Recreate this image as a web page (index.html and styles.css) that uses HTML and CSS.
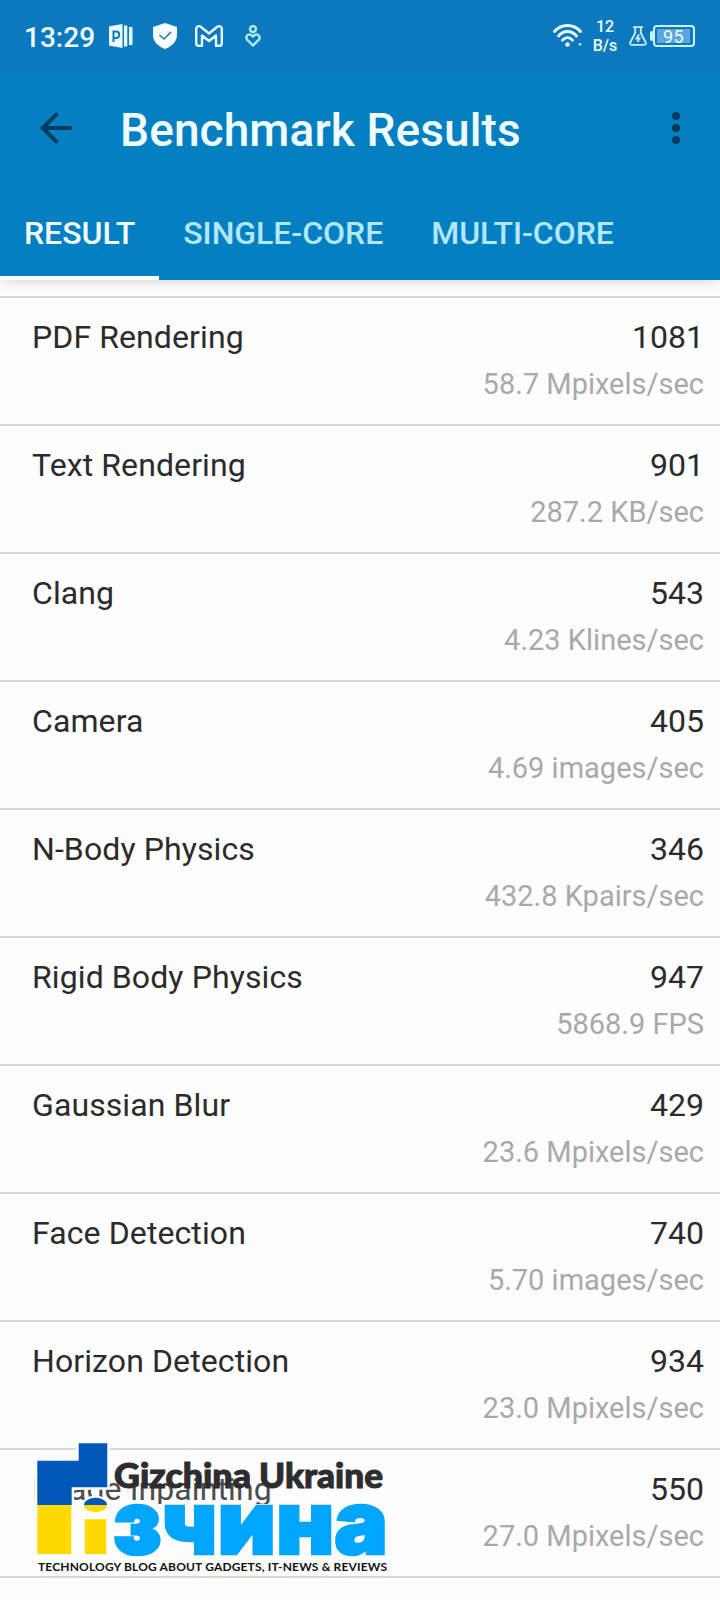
FILE: index.html
```html
<!DOCTYPE html>
<html lang="en">

<head>
    <meta charset="UTF-8">
    <meta name="viewport" content="width=device-width, initial-scale=1.0">
    <title>Benchmark Results</title>
    <link rel="stylesheet" href="styles.css">
</head>

<body>
    <header class="header">
        <div class="status">
            <span class="clock">13:29</span>
            <svg class="app" width="26" height="26" viewBox="0 0 26 26">
                <path d="M1 4Q1 3.500 2 3.200L14.500 1V25L2 22.800Q1 22.500 1 22Z" fill="#eefcff" />
                <path d="M16 2.500H19.300V23.500H16ZM21 4H24.500V22H21Z" fill="#dff8ff" />
                <path d="M5.500 19V8.500H8.500A3.300 3.300 0 0 1 8.500 15H5.500" fill="none" stroke="#0c79be" stroke-width="2" />
            </svg>
            <svg class="shield" width="24" height="26" viewBox="0 0 24 26">
                <path d="M12 0L24 4V12C24 19 18.500 23.500 12 26C5.500 23.500 0 19 0 12V4Z" fill="#f5feff" />
                <path d="M6.500 12L11 16L18 9" fill="none" stroke="#2a77a8" stroke-width="1.600" />
            </svg>
            <svg class="mail" width="28" height="22" viewBox="0 0 28 22">
                <path d="M1.200 4C1.200 1 4 .500 6 2L14 8.500L22 2C24 .500 26.800 1 26.800 4V18.500Q26.800 20.800 24.500 20.800H21V10.500L14 16L7 10.500V20.800H3.500Q1.200 20.800 1.200 18.500Z" fill="none" stroke="#e6faff" stroke-width="2.400" stroke-linejoin="round" />
            </svg>
            <svg class="care" width="16" height="22" viewBox="0 0 16 22">
                <circle cx="8" cy="4" r="3" />
                <path d="M8 20.500L2 14.500C-.500 11 4.500 7 8 11.500C11.500 7 16.500 11 14 14.500Z" />
            </svg>
            <div class="right">
                <svg class="wifi" width="30" height="26" viewBox="0 0 30 26">
                    <path d="M1.500 8.500C8.500 .500 20.500 .500 27.500 8.500M5.500 13C10.500 7 18.500 7 23.500 13M9.500 17.200C12.500 13.700 16.500 13.700 19.500 17.200" />
                    <circle cx="14.500" cy="21.500" r="2.300" />
                    <path class="tip" d="M25 20.500H29L27 23Z" />
                </svg>
                <div class="speed">12<br>B/s</div>
                <svg class="flask" width="18" height="20" viewBox="0 0 18 20">
                    <path d="M4 1.200H14M6.200 1.500V7L1.200 16.500Q.800 18.800 3 18.800H15Q17.200 18.800 16.800 16.500L11.800 7V1.500" />
                    <path d="M10 8.500L7.500 12.500H10.500L8.500 16" />
                </svg>
                <div class="battery"><span>95</span></div>
            </div>
        </div>
        <div class="toolbar">
            <svg width="48" height="48" viewBox="0 0 24 24">
                <path d="M20 11H7.830l5.590-5.590L12 4l-8 8 8 8 1.410-1.410L7.830 13H20v-2z" />
            </svg>
            <h1>Benchmark Results</h1>
            <svg width="48" height="48" viewBox="0 0 24 24">
                <circle cx="12" cy="6" r="2" />
                <circle cx="12" cy="12" r="2" />
                <circle cx="12" cy="18" r="2" />
            </svg>
        </div>
        <nav class="tabs">
            <a class="tab active">RESULT</a>
            <a class="tab">SINGLE-CORE</a>
            <a class="tab">MULTI-CORE</a>
        </nav>
    </header>

    <main class="results">
        <div class="row">
            <p class="name">PDF Rendering</p>
            <div class="value">
                <p class="score">1081</p>
                <p class="rate">58.7 Mpixels/sec</p>
            </div>
        </div>
        <div class="row">
            <p class="name">Text Rendering</p>
            <div class="value">
                <p class="score">901</p>
                <p class="rate">287.2 KB/sec</p>
            </div>
        </div>
        <div class="row">
            <p class="name">Clang</p>
            <div class="value">
                <p class="score">543</p>
                <p class="rate">4.23 Klines/sec</p>
            </div>
        </div>
        <div class="row">
            <p class="name">Camera</p>
            <div class="value">
                <p class="score">405</p>
                <p class="rate">4.69 images/sec</p>
            </div>
        </div>
        <div class="row">
            <p class="name">N-Body Physics</p>
            <div class="value">
                <p class="score">346</p>
                <p class="rate">432.8 Kpairs/sec</p>
            </div>
        </div>
        <div class="row">
            <p class="name">Rigid Body Physics</p>
            <div class="value">
                <p class="score">947</p>
                <p class="rate">5868.9 FPS</p>
            </div>
        </div>
        <div class="row">
            <p class="name">Gaussian Blur</p>
            <div class="value">
                <p class="score">429</p>
                <p class="rate">23.6 Mpixels/sec</p>
            </div>
        </div>
        <div class="row">
            <p class="name">Face Detection</p>
            <div class="value">
                <p class="score">740</p>
                <p class="rate">5.70 images/sec</p>
            </div>
        </div>
        <div class="row">
            <p class="name">Horizon Detection</p>
            <div class="value">
                <p class="score">934</p>
                <p class="rate">23.0 Mpixels/sec</p>
            </div>
        </div>
        <div class="row">
            <p class="name faded">Image Inpainting</p>
            <div class="value">
                <p class="score">550</p>
                <p class="rate">27.0 Mpixels/sec</p>
            </div>
        </div>
        <div class="row"></div>
    </main>

    <!-- Watermark over the last row -->
    <svg class="watermark" width="360" height="140" viewBox="0 0 360 140">
        <path d="M7 74H360V124H7Z" fill="#fdfdfd" />
        <path d="M7.300 30.700H48.700V13.300H77.300V57.300H41.700V75H7.300Z" fill="#0057b8" stroke="#fdfdfd" stroke-width="5" paint-order="stroke" />
        <path d="M7.300 75H41.300V124H7.300ZM54.800 89.300H76.300V124H54.800Z" fill="#ffd900" />
        <ellipse cx="65.500" cy="74.500" rx="13" ry="9" fill="#fdfdfd" />
        <path d="M54 75A11.500 7.200 0 0 1 77 75Z" fill="#0057b8" />
        <path d="M54 75A11.500 7.200 0 0 0 77 75Z" fill="#ffd900" />
        <text class="brand" x="84" y="57.500" textLength="137" lengthAdjust="spacingAndGlyphs">Gizchina</text>
        <text class="brand" x="229" y="57.500" textLength="124" lengthAdjust="spacingAndGlyphs">Ukraine</text>
        <text class="brand-ua" x="83" y="123.500" textLength="275" lengthAdjust="spacingAndGlyphs">зчина</text>
        <text class="tagline" x="8" y="141" textLength="349">TECHNOLOGY BLOG ABOUT GADGETS, IT-NEWS &amp; REVIEWS</text>
    </svg>
</body>

</html>
```
FILE: styles.css
```css
* {
    margin: 0;
    padding: 0;
    box-sizing: border-box;
}

body {
    position: relative;
    width: 720px;
    height: 1600px;
    overflow: hidden;
    background: #fdfdfd;
    font-family: Roboto, sans-serif;
    color: #2b2b2b;
}

.header {
    height: 280px;
    background: linear-gradient(#0d79bf 0, #0b79bf 66px, #047fc2 76px);
    box-shadow: 0 2px 10px rgba(0, 0, 0, .14);
    color: #f0fdff;
}

/* Status bar */
.status {
    display: flex;
    align-items: center;
    height: 72px;
    padding: 0 25px 0 24px;
}

.clock {
    width: 72px;
    font-size: 28px;
    font-weight: 500;
    padding-top: 2px;
}

.app {
    margin-left: 12px;
}

.shield {
    margin-left: 19px;
}

.mail {
    margin-left: 18px;
}

.care {
    margin-left: 22px;
    fill: none;
    stroke: #b5ecfb;
    stroke-width: 2.3;
}

.right {
    display: flex;
    align-items: center;
    margin-left: auto;
}

.wifi {
    fill: none;
    stroke: #e6faff;
    stroke-width: 2.8;
    stroke-linecap: round;
}

.wifi circle,
.wifi .tip {
    fill: #e6faff;
    stroke: none;
}

.speed {
    width: 46px;
    padding-right: 2px;
    text-align: center;
    font-size: 16px;
    font-weight: 500;
    line-height: 19px;
}

.flask {
    fill: none;
    stroke: #c9f1fc;
    stroke-width: 1.8;
}

.battery {
    position: relative;
    width: 42px;
    height: 22px;
    margin-left: 6px;
    padding: 2px;
    border: 2px solid #c9f1fc;
    border-radius: 4px;
}

.battery::before {
    content: "";
    position: absolute;
    left: -5px;
    top: 4px;
    width: 3px;
    height: 10px;
    border-radius: 2px 0 0 2px;
    background: #c9f1fc;
}

.battery span {
    display: block;
    width: 33px;
    height: 14px;
    background: #5ba5d8;
    font-size: 18px;
    line-height: 15px;
    letter-spacing: .3px;
    text-align: center;
}

/* Toolbar */
.toolbar {
    display: flex;
    align-items: center;
    height: 112px;
    padding: 0 20px 0 32px;
}

.toolbar svg {
    fill: #063b5c;
}

.toolbar h1 {
    flex: 1;
    margin-left: 40px;
    padding-top: 4px;
    font-size: 46px;
    font-weight: 500;
    line-height: 54px;
    letter-spacing: .1px;
    white-space: nowrap;
}

/* Tabs */
.tabs {
    display: flex;
    height: 96px;
}

.tab {
    height: 96px;
    padding: 0 24px;
    font-size: 32px;
    font-weight: 500;
    line-height: 98px;
    letter-spacing: -.03px;
    white-space: nowrap;
    color: #b3e8fc;
}

.tab.active {
    border-bottom: 4px solid #fff;
    color: #f0fdff;
}

/* Result list */
.results {
    padding-top: 16px;
}

.row {
    display: flex;
    justify-content: space-between;
    height: 128px;
    padding: 17px 16px 0 32px;
    border-top: 2px solid #d9d9d9;
}

.row:last-child {
    height: 22px;
}

.name,
.score {
    font-size: 32px;
    line-height: 44px;
}

.name {
    letter-spacing: .1px;
}

.name.faded {
    color: #4d4d4d;
}

.value {
    text-align: right;
}

.rate {
    font-size: 29px;
    line-height: 44px;
    margin-top: 3px;
    color: #a9a9a9;
}

.watermark {
    position: absolute;
    left: 30px;
    top: 1430px;
    overflow: visible;
}

.brand {
    font-family: Lato, sans-serif;
    font-size: 34px;
    font-weight: 900;
    fill: #2d2d2f;
    stroke: #2d2d2f;
    stroke-width: 1;
}

.brand-ua {
    font-family: Inter, sans-serif;
    font-size: 88px;
    font-weight: 900;
    fill: #00a5ff;
    stroke: #00a5ff;
    stroke-width: 2.5;
}

.tagline {
    font-family: Lato, sans-serif;
    font-size: 12px;
    font-weight: 700;
    fill: #111;
}
```
